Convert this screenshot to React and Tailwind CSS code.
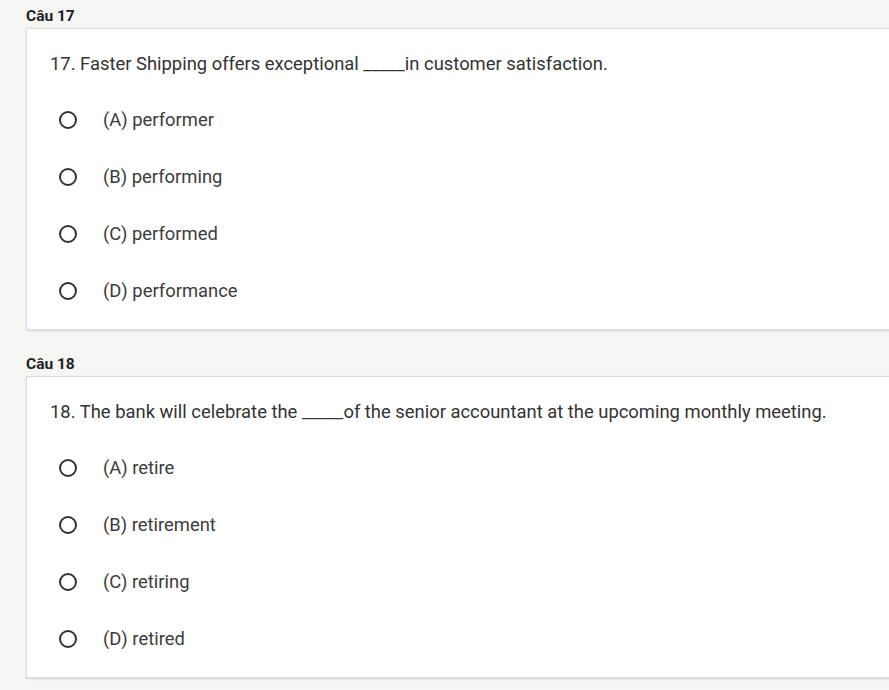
const questions = [
  {
    label: 'Câu 17',
    text: '17. Faster Shipping offers exceptional _____in customer satisfaction.',
    options: ['(A) performer', '(B) performing', '(C) performed', '(D) performance'],
  },
  {
    label: 'Câu 18',
    text: '18. The bank will celebrate the _____of the senior accountant at the upcoming monthly meeting.',
    options: ['(A) retire', '(B) retirement', '(C) retiring', '(D) retired'],
  },
];

function Question({ label, text, options }) {
  return (
    <section>
      <h2 className="text-[15.5px] leading-[18px] font-bold text-[#202124] mb-[3px]">{label}</h2>
      <div className="w-[880px] bg-white border border-[#dedede] shadow-[0_1px_2px_rgba(0,0,0,0.12)] pt-[23px] pb-[10px]">
        <p className="pl-[23px] text-[18.4px] leading-[24px] text-[#333]">{text}</p>
        <ul className="mt-[15px]">
          {options.map((opt) => (
            <li key={opt} className="h-[57px] flex items-center pl-[32px]">
              <span className="w-[18px] h-[18px] rounded-full border-2 border-[#333] shrink-0" />
              <span className="ml-[26px] text-[18.4px] leading-[24px] text-[#3c3c3c]">{opt}</span>
            </li>
          ))}
        </ul>
      </div>
    </section>
  );
}

export default function App() {
  return (
    <div
      className="w-[889px] h-[690px] overflow-hidden bg-[#f5f5f1] pl-[26px] pt-[7px] flex flex-col gap-[25px]"
      style={{ fontFamily: 'Roboto, "Liberation Sans", sans-serif' }}
    >
      {questions.map((q) => (
        <Question key={q.label} {...q} />
      ))}
    </div>
  );
}
